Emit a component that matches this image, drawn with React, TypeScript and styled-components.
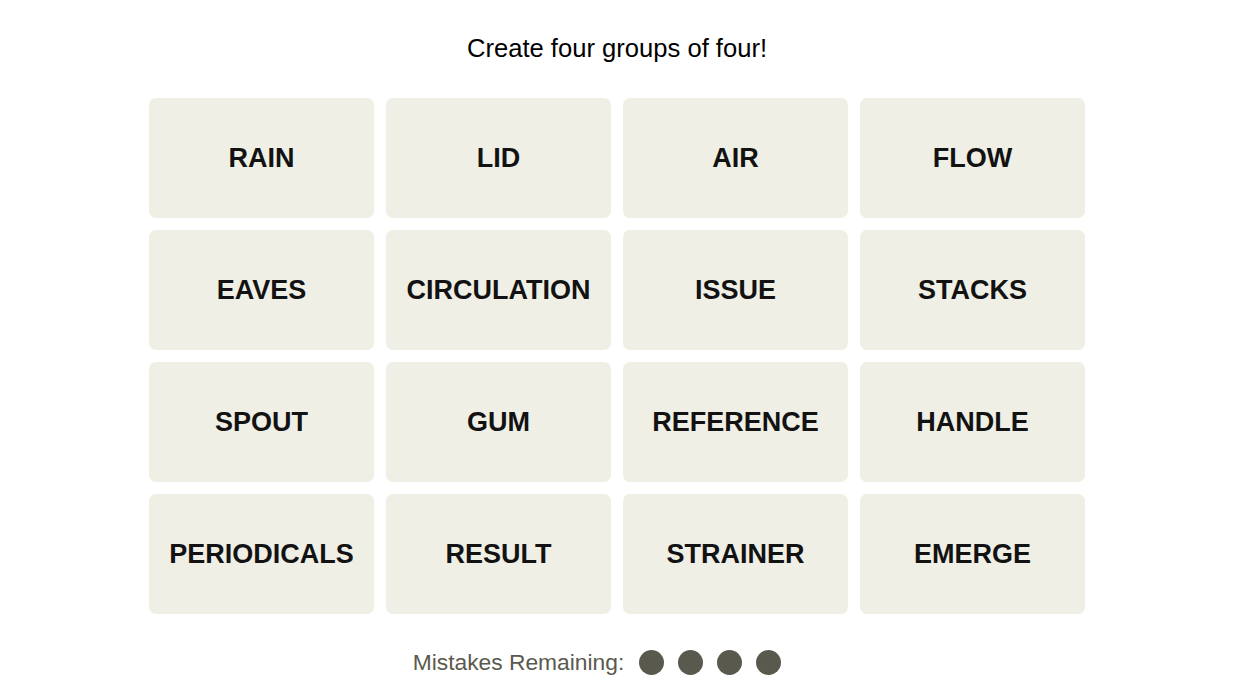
import React from "react";
import styled, { createGlobalStyle } from "styled-components";

const GlobalStyle = createGlobalStyle`
  html, body { margin: 0; padding: 0; background: #ffffff; }
  body { font-family: "Liberation Sans", Arial, sans-serif; }
`;

const Page = styled.main`
  display: flex;
  flex-direction: column;
  align-items: center;
  padding: 33px 9px 0 0;
`;

const Title = styled.h1`
  margin: 0;
  font-size: 25.6px;
  line-height: 30px;
  font-weight: 400;
  color: #000000;
`;

const Board = styled.section`
  margin-top: 35px;
  display: grid;
  grid-template-columns: repeat(4, 225px);
  grid-auto-rows: 120px;
  gap: 12px;
`;

const Tile = styled.button`
  border: none;
  border-radius: 7px;
  background: #efefe6;
  color: #121212;
  font-family: "Liberation Sans", Arial, sans-serif;
  font-weight: 700;
  font-size: 27px;
  text-transform: uppercase;
  display: flex;
  align-items: center;
  justify-content: center;
  padding: 0;
  cursor: pointer;
`;

const Mistakes = styled.div`
  margin-top: 33px;
  display: flex;
  align-items: center;
  height: 30px;
  gap: 15px;
`;

const MistakesLabel = styled.span`
  font-size: 22.8px;
  color: #5a594e;
`;

const Dots = styled.div`
  display: flex;
  gap: 14px;
  min-width: 182px;
`;

const Dot = styled.span`
  width: 25px;
  height: 25px;
  border-radius: 50%;
  background: #5a594e;
`;

const words = [
  "RAIN", "LID", "AIR", "FLOW",
  "EAVES", "CIRCULATION", "ISSUE", "STACKS",
  "SPOUT", "GUM", "REFERENCE", "HANDLE",
  "PERIODICALS", "RESULT", "STRAINER", "EMERGE",
];

export default function App() {
  return (
    <>
      <GlobalStyle />
      <Page>
        <Title>Create four groups of four!</Title>
        <Board>
          {words.map((w) => (
            <Tile key={w}>{w}</Tile>
          ))}
        </Board>
        <Mistakes>
          <MistakesLabel>Mistakes Remaining:</MistakesLabel>
          <Dots>
            {[0, 1, 2, 3].map((i) => (
              <Dot key={i} />
            ))}
          </Dots>
        </Mistakes>
      </Page>
    </>
  );
}
